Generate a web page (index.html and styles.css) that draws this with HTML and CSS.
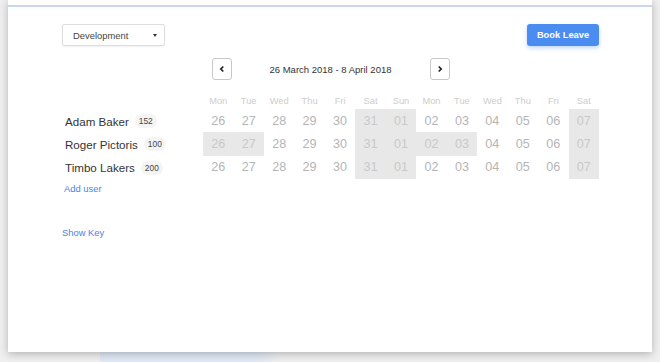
FILE: index.html
```html
<!DOCTYPE html>
<html lang="en">
<head>
  <meta charset="UTF-8" />
  <title>Leave Planner</title>
  <link rel="stylesheet" href="styles.css">
</head>
<body>
  <div class="card">
    <div class="topbar"></div>

    <div class="content">
      <div class="toolbar">
        <div class="select">Development <span class="caret"></span></div>
        <button class="btn-primary">Book Leave</button>
      </div>

      <div class="range-nav">
        <button class="nav-btn">
          <svg width="6" height="8" viewBox="0 0 6 8"><path d="M4.3 1.5 L1.8 4 L4.3 6.5" fill="none" stroke="#222" stroke-width="1.7"/></svg>
        </button>
        <span class="range">26 March 2018 - 8 April 2018</span>
        <button class="nav-btn">
          <svg width="6" height="8" viewBox="0 0 6 8"><path d="M1.7 1.5 L4.2 4 L1.7 6.5" fill="none" stroke="#222" stroke-width="1.7"/></svg>
        </button>
      </div>

      <div class="planner" id="planner"></div>

      <a class="link add-user" href="#">Add user</a>
      <a class="link show-key" href="#">Show Key</a>
    </div>
  </div>

  <script>
    const DAYS = ['Mon','Tue','Wed','Thu','Fri','Sat','Sun','Mon','Tue','Wed','Thu','Fri','Sat'];
    const DATES = ['26','27','28','29','30','31','01','02','03','04','05','06','07'];
    const WEEKEND = [5, 6, 12];
    const USERS = [
      { name: 'Adam Baker', days: 152, leave: [] },
      { name: 'Roger Pictoris', days: 100, leave: [0, 1, 7, 8] },
      { name: 'Timbo Lakers', days: 200, leave: [] }
    ];

    const grid = document.getElementById('planner');
    let html = '<div class="cell-name"></div>';
    DAYS.forEach(d => html += `<div class="day">${d}</div>`);
    USERS.forEach(u => {
      html += `<div class="cell-name"><span class="name">${u.name}</span><span class="badge">${u.days}</span></div>`;
      DATES.forEach((d, i) => {
        const off = WEEKEND.includes(i) || u.leave.includes(i);
        html += `<div class="date${off ? ' off' : ''}">${d}</div>`;
      });
    });
    grid.innerHTML = html;
  </script>
</body>
</html>
```

FILE: styles.css
```css
* { box-sizing: border-box; margin: 0; padding: 0; }
body {
  font-family: 'Liberation Sans', Arial, sans-serif;
  color: #333;
  height: 362px;
  overflow: hidden;
  background: linear-gradient(90deg, #efefef 100px, #dfe8f5 100px, #dfe8f5 255px, #efefef 280px);
}

/* Main card */
.card {
  margin: 0 8px;
  height: 352px;
  background: #fff;
  box-shadow: 0 2px 8px rgba(0,0,0,0.25);
}
.topbar { height: 7px; border-bottom: 2px solid #cad6f0; }

.content { padding: 17px 53px 0 54px; }

/* Toolbar */
.toolbar { display: flex; justify-content: space-between; align-items: center; }
.select {
  width: 103px; height: 22px;
  display: flex; align-items: center; justify-content: space-between;
  padding: 0 7px 0 10px;
  border: 1px solid #ddd; border-radius: 2px;
  box-shadow: 0 1px 2px rgba(0,0,0,0.06);
  font-size: 9.4px; color: #444;
}
.caret {
  width: 0; height: 0;
  border-left: 2px solid transparent; border-right: 2px solid transparent;
  border-top: 3px solid #333;
}
.btn-primary {
  width: 72px; height: 22px;
  border: none; border-radius: 3px;
  background: #4a8cf0; color: #fff;
  font-family: inherit; font-size: 9.3px; font-weight: bold;
  box-shadow: 0 2px 4px rgba(74,140,240,0.35);
}

/* Date range nav */
.range-nav {
  display: flex; justify-content: center; align-items: center; gap: 38px;
  margin-top: 12px;
}
.nav-btn {
  width: 20px; height: 22px;
  display: flex; align-items: center; justify-content: center;
  background: #fff; border: 1px solid #c8c8c8; border-radius: 3px;
}
.range { font-size: 9.5px; color: #333; }

/* Planner grid */
.planner {
  display: grid;
  grid-template-columns: 141px repeat(13, 1fr);
  grid-auto-rows: 23.3px;
  grid-template-rows: 17px;
  margin-top: 12px;
}
.day {
  display: flex; align-items: center; justify-content: center;
  font-size: 9.3px; color: #cdcdcd;
}
.date {
  display: flex; align-items: center; justify-content: center;
  font-size: 12.6px; color: #b5b5b5;
}
.date.off { background: #e8e8e8; color: #c9c9c9; }
.cell-name { display: flex; align-items: center; gap: 6px; padding-left: 3px; padding-top: 1px; }
.name { font-size: 11.6px; color: #333; }
.badge {
  background: #f4f4f4; border-radius: 8px;
  padding: 2px 4px;
  font-size: 8.4px; color: #444;
}

.link { display: block; color: #4a7fe6; text-decoration: none; font-size: 9.4px; }
.add-user { margin-top: 4px; padding-left: 2px; }
.show-key { margin-top: 33px; }
```
